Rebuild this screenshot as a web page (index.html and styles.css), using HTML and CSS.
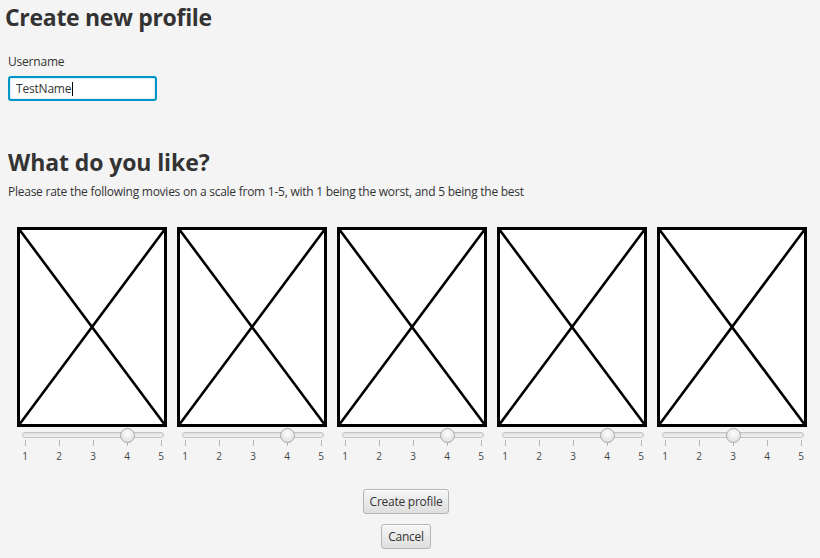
FILE: index.html
```html
<!DOCTYPE html>
<html lang="en">
<head>
<meta charset="utf-8">
<title>Create new profile</title>
<link rel="stylesheet" href="styles.css">
</head>
<body>
<main class="page">
  <h1 class="heading">Create new profile</h1>
  <section class="field">
    <label class="field__label" for="username">Username</label>
    <div class="field__input" id="username">TestName<span class="caret"></span></div>
  </section>

  <h2 class="heading heading--sub">What do you like?</h2>
  <p class="hint">Please rate the following movies on a scale from 1-5, with 1 being the worst, and 5 being the best</p>

  <div class="movies">
    <div class="movie">
      <svg class="poster" width="150" height="200" viewBox="0 0 150 200"><rect x="1.5" y="1.5" width="147" height="197" fill="#fff" stroke="#000" stroke-width="3"/><path d="M2 2L148 198M148 2L2 198" stroke="#000" stroke-width="2.6" fill="none"/></svg>
      <div class="slider">
        <div class="slider__track"></div>
        <div class="slider__thumb" style="left:97.5px"></div>
        <div class="slider__scale"><span class="tick">1</span><span class="tick">2</span><span class="tick">3</span><span class="tick">4</span><span class="tick">5</span></div>
      </div>
    </div>
    <div class="movie">
      <svg class="poster" width="150" height="200" viewBox="0 0 150 200"><rect x="1.5" y="1.5" width="147" height="197" fill="#fff" stroke="#000" stroke-width="3"/><path d="M2 2L148 198M148 2L2 198" stroke="#000" stroke-width="2.6" fill="none"/></svg>
      <div class="slider">
        <div class="slider__track"></div>
        <div class="slider__thumb" style="left:97.5px"></div>
        <div class="slider__scale"><span class="tick">1</span><span class="tick">2</span><span class="tick">3</span><span class="tick">4</span><span class="tick">5</span></div>
      </div>
    </div>
    <div class="movie">
      <svg class="poster" width="150" height="200" viewBox="0 0 150 200"><rect x="1.5" y="1.5" width="147" height="197" fill="#fff" stroke="#000" stroke-width="3"/><path d="M2 2L148 198M148 2L2 198" stroke="#000" stroke-width="2.6" fill="none"/></svg>
      <div class="slider">
        <div class="slider__track"></div>
        <div class="slider__thumb" style="left:97.5px"></div>
        <div class="slider__scale"><span class="tick">1</span><span class="tick">2</span><span class="tick">3</span><span class="tick">4</span><span class="tick">5</span></div>
      </div>
    </div>
    <div class="movie">
      <svg class="poster" width="150" height="200" viewBox="0 0 150 200"><rect x="1.5" y="1.5" width="147" height="197" fill="#fff" stroke="#000" stroke-width="3"/><path d="M2 2L148 198M148 2L2 198" stroke="#000" stroke-width="2.6" fill="none"/></svg>
      <div class="slider">
        <div class="slider__track"></div>
        <div class="slider__thumb" style="left:97.5px"></div>
        <div class="slider__scale"><span class="tick">1</span><span class="tick">2</span><span class="tick">3</span><span class="tick">4</span><span class="tick">5</span></div>
      </div>
    </div>
    <div class="movie">
      <svg class="poster" width="150" height="200" viewBox="0 0 150 200"><rect x="1.5" y="1.5" width="147" height="197" fill="#fff" stroke="#000" stroke-width="3"/><path d="M2 2L148 198M148 2L2 198" stroke="#000" stroke-width="2.6" fill="none"/></svg>
      <div class="slider">
        <div class="slider__track"></div>
        <div class="slider__thumb" style="left:63.5px"></div>
        <div class="slider__scale"><span class="tick">1</span><span class="tick">2</span><span class="tick">3</span><span class="tick">4</span><span class="tick">5</span></div>
      </div>
    </div>
  </div>

  <div class="actions">
    <button class="btn" type="button">Create profile</button>
    <button class="btn" type="button">Cancel</button>
  </div>
</main>
</body>
</html>
```
FILE: styles.css
```css
html, body {
  margin: 0;
  padding: 0;
  background: #f4f4f4;
}
body {
  font-family: "Open Sans", "Noto Sans", sans-serif;
  color: #333;
  width: 820px;
  height: 558px;
  overflow: hidden;
}
.page {
  display: flex;
  flex-direction: column;
  width: 812px;
}
.heading {
  margin: 1px 0 0 5px;
  font-size: 23px;
  line-height: 32px;
  font-weight: 700;
  color: #333;
  letter-spacing: -0.3px;
}
.field {
  display: flex;
  flex-direction: column;
  align-items: flex-start;
  margin: 21px 0 0 8px;
}
.field__label {
  font-size: 12px;
  line-height: 16px;
  color: #333;
  letter-spacing: -0.2px;
}
.field__input {
  box-sizing: border-box;
  margin-top: 6px;
  width: 149px;
  height: 25px;
  padding: 0 6px;
  background: #fff;
  border: 2px solid #0096c9;
  border-radius: 3px;
  font-size: 12px;
  line-height: 21px;
  color: #333;
  letter-spacing: -0.2px;
  display: flex;
  align-items: center;
  box-shadow: inset 0 0 0 1px #d8eef8;
}
.caret {
  display: inline-block;
  width: 1px;
  height: 14px;
  background: #000;
  margin-left: 1px;
}
.heading--sub {
  margin: 45px 0 0 8px;
  letter-spacing: -0.1px;
}
.hint {
  margin: 6px 0 0 8px;
  font-size: 12px;
  line-height: 16px;
  color: #333;
  letter-spacing: -0.25px;
}
.movies {
  display: flex;
  gap: 10px;
  margin: 27px 0 0 17px;
}
.movie {
  display: flex;
  flex-direction: column;
  width: 150px;
}
.poster {
  display: block;
}
.slider {
  position: relative;
  width: 142px;
  margin: 5px 0 0 5px;
}
.slider__track {
  box-sizing: border-box;
  height: 6px;
  border: 1px solid #c4c4c4;
  border-radius: 3px;
  background: linear-gradient(#e0e0e0, #f2f2f2);
}
.slider__thumb {
  position: absolute;
  top: -4.5px;
  box-sizing: border-box;
  width: 15px;
  height: 15px;
  border-radius: 50%;
  border: 1px solid #a9a9a9;
  background: radial-gradient(circle at 50% 35%, #fdfdfd 0%, #e8e8e8 60%, #d6d6d6 100%);
}
.slider__scale {
  display: flex;
  justify-content: space-between;
  margin-top: 2px;
}
.tick {
  display: flex;
  flex-direction: column;
  align-items: center;
  width: 6px;
  font-size: 10px;
  line-height: 14px;
  color: #444;
}
.tick::before {
  content: "";
  display: block;
  width: 1px;
  height: 6px;
  background: #b5b5b5;
  margin-bottom: 3px;
}
.actions {
  display: flex;
  flex-direction: column;
  align-items: center;
  gap: 10px;
  margin-top: 26px;
}
.btn {
  box-sizing: border-box;
  height: 25px;
  padding: 0 6px;
  font-family: "Open Sans", "Noto Sans", sans-serif;
  font-size: 12px;
  letter-spacing: -0.25px;
  color: #333;
  border: 1px solid #b5b5b5;
  border-radius: 3px;
  background: linear-gradient(#f6f6f6, #dedede);
  box-shadow: inset 0 1px 0 #fff;
}
```
